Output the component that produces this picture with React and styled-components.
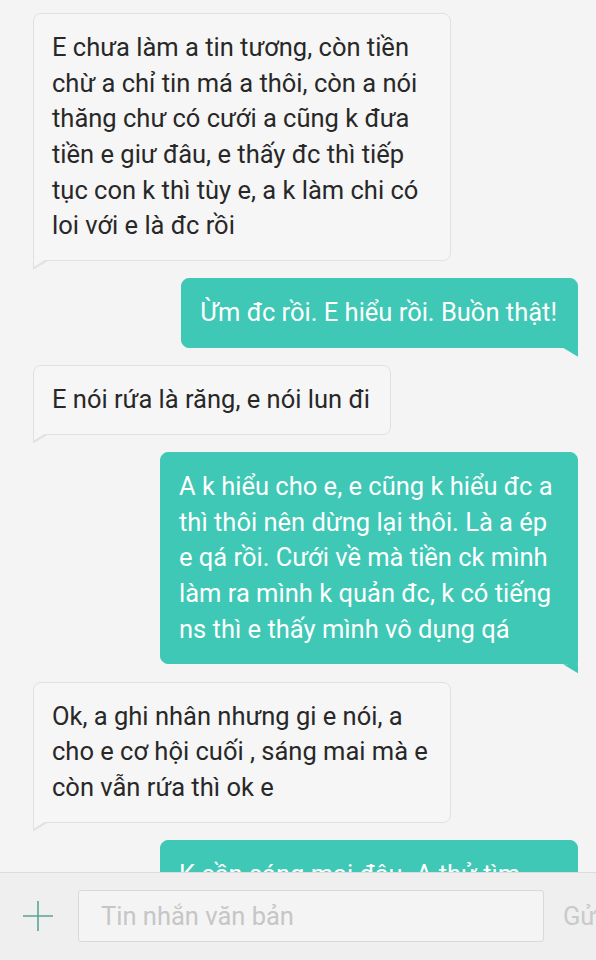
import styled, { createGlobalStyle } from "styled-components";

const messages = [
  {
    mine: false,
    full: true,
    text: "E chưa làm a tin tương, còn tiền\nchừ a chỉ tin má a thôi, còn a nói\nthăng chư có cưới a cũng k đưa\ntiền e giư đâu, e thấy đc thì tiếp\ntục con k thì tùy e, a k làm chi có\nloi với e là đc rồi",
  },
  { mine: true, text: "Ừm đc rồi. E hiểu rồi. Buồn thật!" },
  { mine: false, text: "E nói rứa là răng, e nói lun đi" },
  {
    mine: true,
    full: true,
    text: "A k hiểu cho e, e cũng k hiểu đc a\nthì thôi nên dừng lại thôi. Là a ép\ne qá rồi. Cưới về mà tiền ck mình\nlàm ra mình k quản đc, k có tiếng\nns thì e thấy mình vô dụng qá",
  },
  {
    mine: false,
    full: true,
    text: "Ok, a ghi nhân nhưng gi e nói, a\ncho e cơ hội cuối , sáng mai mà e\ncòn vẫn rứa thì ok e",
  },
  {
    mine: true,
    full: true,
    text: "K cần sáng mai đâu. A thử tìm\nhiểu lại đi",
  },
];

const GlobalStyle = createGlobalStyle`
  html, body {
    margin: 0;
    padding: 0;
    background: #f4f4f4;
  }
  body {
    font-family: Roboto, "Noto Sans", "Liberation Sans", sans-serif;
  }
`;

const Screen = styled.div`
  width: 596px;
  height: 960px;
  display: flex;
  flex-direction: column;
  background: #f4f4f4;
  overflow: hidden;
`;

const Thread = styled.div`
  flex: 1;
  min-height: 0;
  overflow: hidden;
  display: flex;
  flex-direction: column;
  gap: 17.6px;
  padding: 13px 18px 0 33px;
`;

const Bubble = styled.div`
  position: relative;
  align-self: ${({ $mine }) => ($mine ? "flex-end" : "flex-start")};
  box-sizing: border-box;
  width: ${({ $full }) => ($full ? "418px" : "auto")};
  padding: 15.8px 20px 15.8px 18px;
  font-size: 25.5px;
  line-height: 35.7px;
  white-space: pre;
  color: ${({ $mine }) => ($mine ? "#ffffff" : "#282828")};
  background: ${({ $mine }) => ($mine ? "#3ec8b5" : "#f6f6f6")};
  border: 1px solid ${({ $mine }) => ($mine ? "#3ec8b5" : "#e1e1e1")};
  border-radius: ${({ $mine }) => ($mine ? "8px 8px 0 8px" : "8px 8px 8px 0")};
  flex-shrink: 0;

  &::before,
  &::after {
    content: "";
    position: absolute;
    top: 100%;
    width: 15px;
    height: 9px;
  }

  &::before {
    ${({ $mine }) => ($mine ? "right: -1px;" : "left: -1px;")}
    margin-top: 1px;
    background: ${({ $mine }) => ($mine ? "#3ec8b5" : "#e1e1e1")};
    clip-path: ${({ $mine }) =>
      $mine
        ? "polygon(0 0, 100% 0, 100% 100%)"
        : "polygon(0 0, 100% 0, 0 100%)"};
  }

  &::after {
    ${({ $mine }) => ($mine ? "right: 0;" : "left: 0;")}
    margin-top: -1px;
    height: 8px;
    width: 13px;
    background: ${({ $mine }) => ($mine ? "#3ec8b5" : "#f6f6f6")};
    clip-path: ${({ $mine }) =>
      $mine
        ? "polygon(0 0, 100% 0, 100% 100%)"
        : "polygon(0 0, 100% 0, 0 100%)"};
  }
`;

const Composer = styled.div`
  height: 88px;
  flex-shrink: 0;
  box-sizing: border-box;
  display: flex;
  align-items: center;
  padding: 0 0 2px 23px;
  background: #efefef;
  border-top: 1px solid #dcdcdc;
  overflow: hidden;
`;

const PlusButton = styled.div`
  width: 30px;
  height: 30px;
  display: flex;
  align-items: center;
  justify-content: center;
  flex-shrink: 0;
  margin-right: 25px;
`;

const Input = styled.div`
  box-sizing: border-box;
  width: 466px;
  height: 52px;
  flex-shrink: 0;
  display: flex;
  align-items: center;
  padding-left: 22px;
  background: #f4f4f4;
  border: 1px solid #d9d9d9;
  border-radius: 3px;
  font-size: 25.5px;
  color: #c6c6c6;
`;

const Send = styled.div`
  flex-shrink: 0;
  margin-left: 19px;
  font-size: 25.5px;
  color: #cacaca;
  white-space: nowrap;
`;

const PlusIcon = () => (
  <svg width="30" height="30" viewBox="0 0 30 30">
    <path d="M15 0 V30 M0 15 H30" stroke="#5aa592" strokeWidth="1.6" fill="none" />
  </svg>
);

export default function App() {
  return (
    <>
      <GlobalStyle />
      <Screen>
        <Thread>
          {messages.map((m, i) => (
            <Bubble key={i} $mine={m.mine} $full={m.full}>
              {m.text}
            </Bubble>
          ))}
        </Thread>
        <Composer>
          <PlusButton>
            <PlusIcon />
          </PlusButton>
          <Input>Tin nhắn văn bản</Input>
          <Send>Gửi</Send>
        </Composer>
      </Screen>
    </>
  );
}
